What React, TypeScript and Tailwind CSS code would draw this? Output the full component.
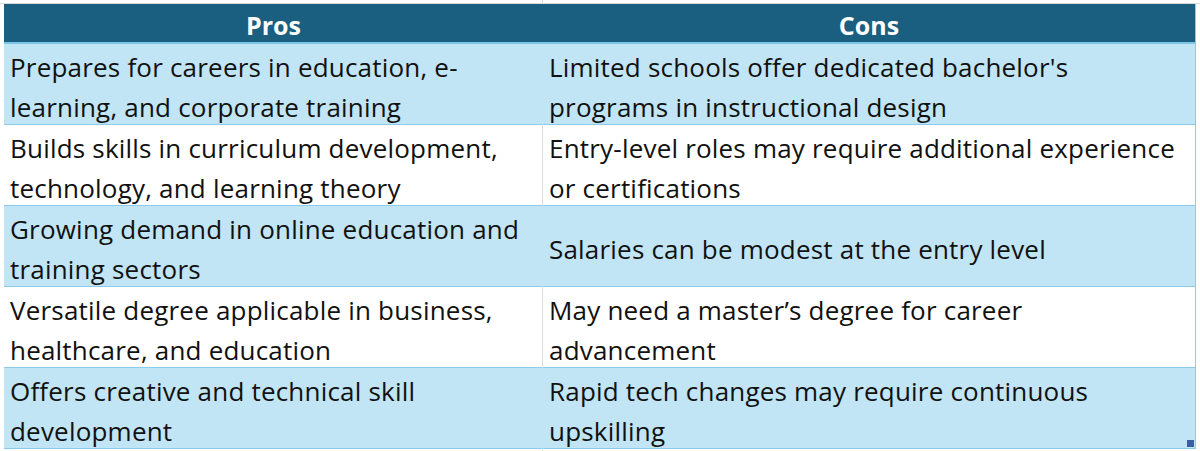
const rows: [string[], string[]][] = [
  [["Prepares for careers in education, e-", "learning, and corporate training"], ["Limited schools offer dedicated bachelor's", "programs in instructional design"]],
  [["Builds skills in curriculum development,", "technology, and learning theory"], ["Entry-level roles may require additional experience", "or certifications"]],
  [["Growing demand in online education and", "training sectors"], ["Salaries can be modest at the entry level"]],
  [["Versatile degree applicable in business,", "healthcare, and education"], ["May need a master\u2019s degree for career", "advancement"]],
  [["Offers creative and technical skill", "development"], ["Rapid tech changes may require continuous", "upskilling"]],
];

function Cell({ lines }: { lines: string[] }) {
  return (
    <div className="flex flex-col justify-center px-[6px] pt-[3px] whitespace-nowrap">
      {lines.map((l, i) => (
        <span key={i}>{l}</span>
      ))}
    </div>
  );
}

export default function App() {
  return (
    <div className="w-[1200px] h-[451px] bg-white overflow-hidden font-['Open_Sans',sans-serif] text-[#111]">
      {/* gridline strip above table */}
      <div className="h-[4px] border-b border-[#dadada] flex">
        <div className="w-[543px] border-r border-[#dadada]" />
      </div>
      <div className="flex">
        <div className="w-[4px]" />
        <div className="w-[1191px] relative">
          <div className="grid grid-cols-[539px_652px] h-[40px] bg-[#1a5e80] text-white font-bold text-[25px] border-b-2 border-[#7ec4e6]">
            <div className="flex items-center justify-center pt-[3px]">Pros</div>
            <div className="flex items-center justify-center pt-[3px]">Cons</div>
          </div>
          {rows.map(([pro, con], i) => (
            <div
              key={i}
              className={`grid grid-cols-[539px_652px] h-[81px] text-[26px] leading-[40px] tracking-[0.2px] border-b border-[#8ccbec] ${
                i % 2 === 0 ? "bg-[#c1e5f5]" : "bg-white"
              }`}
            >
              <div className={`flex border-r ${i % 2 === 0 ? "border-[#c1e5f5]" : "border-[#dcdcdc]"}`}>
                <Cell lines={pro} />
              </div>
              <Cell lines={con} />
            </div>
          ))}
          <div className="absolute right-[1px] bottom-[2px] w-[7px] h-[7px] bg-[#3b5ea8]" />
        </div>
        <div className="border-l border-[#8ccbec]" />
      </div>
    </div>
  );
}
